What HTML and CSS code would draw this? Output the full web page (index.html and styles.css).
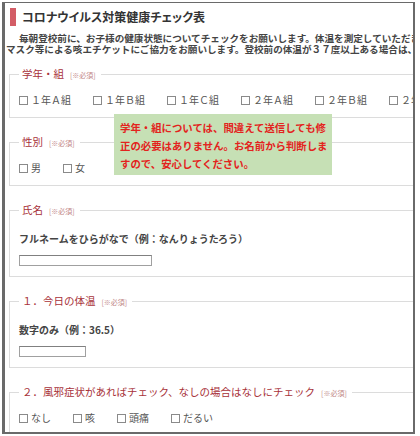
FILE: index.html
```html
<!DOCTYPE html>
<html lang="ja">
<head>
<meta charset="utf-8">
<title>コロナウイルス対策健康チェック表</title>
<link rel="stylesheet" href="styles.css">
</head>
<body>
<div class="window">
  <div class="page">
    <h1 class="title">コロナウイルス対策健康チェック表</h1>
    <p class="intro">毎朝登校前に、お子様の健康状態についてチェックをお願いします。体温を測定していただき、<br>マスク等による咳エチケットにご協力をお願いします。登校前の体温が３７度以上ある場合は、登校を控えてください。</p>

    <fieldset class="group">
      <legend><span class="q">学年・組</span><span class="req">[※必須]</span></legend>
      <div class="choices">
        <label class="choice"><span class="box"></span>１年Ａ組</label>
        <label class="choice"><span class="box"></span>１年Ｂ組</label>
        <label class="choice"><span class="box"></span>１年Ｃ組</label>
        <label class="choice"><span class="box"></span>２年Ａ組</label>
        <label class="choice"><span class="box"></span>２年Ｂ組</label>
        <label class="choice"><span class="box"></span>２年Ｃ組</label>
      </div>
    </fieldset>

    <fieldset class="group">
      <legend><span class="q">性別</span><span class="req">[※必須]</span></legend>
      <div class="choices">
        <label class="choice"><span class="box"></span>男</label>
        <label class="choice"><span class="box"></span>女</label>
      </div>
    </fieldset>

    <fieldset class="group">
      <legend><span class="q">氏名</span><span class="req">[※必須]</span></legend>
      <div class="prompt">フルネームをひらがなで（例：なんりょうたろう）</div>
      <input class="textbox wide" type="text">
    </fieldset>

    <fieldset class="group">
      <legend><span class="q">１．今日の体温</span><span class="req">[※必須]</span></legend>
      <div class="prompt">数字のみ（例：36.5）</div>
      <input class="textbox narrow" type="text">
    </fieldset>

    <fieldset class="group">
      <legend><span class="q">２．風邪症状があればチェック、なしの場合はなしにチェック</span><span class="req">[※必須]</span></legend>
      <div class="choices">
        <label class="choice"><span class="box"></span>なし</label>
        <label class="choice"><span class="box"></span>咳</label>
        <label class="choice"><span class="box"></span>頭痛</label>
        <label class="choice"><span class="box"></span>だるい</label>
      </div>
    </fieldset>

    <div class="note">学年・組については、間違えて送信しても修正の必要はありません。お名前から判断しますので、安心してください。</div>
  </div>
</div>
</body>
</html>
```

FILE: styles.css
```css
html, body {
  margin: 0;
  background: #fff;
}

body {
  font-family: "Noto Sans CJK JP", "Noto Sans", sans-serif;
  font-size: 10px;
  color: #444;
}

.window {
  margin: 2px 0 0 2px;
  width: 413px;
  height: 432px;
  box-sizing: border-box;
  border-style: solid;
  border-color: #6a6a6a;
  border-width: 1px 2px 2px 3px;
  overflow: hidden;
}

.page {
  position: relative;
  height: 100%;
  box-sizing: border-box;
  padding: 5px 0 0 1px;
  overflow: hidden;
}

.title {
  margin: 0 0 0 4px;
  height: 18px;
  line-height: 18px;
  border-left: 6px solid #d35d66;
  padding-left: 6px;
  font-size: 12px;
  font-weight: bold;
  color: #333;
  font-feature-settings: "palt";
}

.intro {
  margin: 7px 0 0;
  font-size: 9.6px;
  line-height: 11px;
  font-weight: bold;
  color: #444;
  white-space: nowrap;
  text-indent: 13px;
}

.group {
  margin: 17px 0 0 3px;
  padding: 11px 9px 10px 9px;
  border: 1px solid #dcdcdc;
  width: 460px;
  min-width: 0;
  box-sizing: border-box;
}

.group:first-of-type {
  margin-top: 12px;
}

.group legend {
  padding: 0 5px 0 3px;
  font-size: 10.5px;
  line-height: 14px;
  white-space: nowrap;
}

.q {
  color: #a8323a;
}

.req {
  font-size: 7px;
  color: #c08585;
  margin-left: 6px;
}

.choices {
  display: flex;
  white-space: nowrap;
  line-height: 14px;
  font-size: 10px;
  color: #555;
}

.choice {
  display: inline-flex;
  align-items: center;
  margin-right: 22px;
  flex: none;
}

.box {
  width: 7px;
  height: 7px;
  border: 1px solid #8a8a8a;
  margin-right: 3px;
}

.prompt {
  font-size: 10px;
  line-height: 20px;
  font-weight: bold;
  color: #444;
}

.textbox {
  display: block;
  margin: 6px 0 0;
  padding: 0;
  height: 11px;
  box-sizing: border-box;
  border: 1px solid #a0a0a0;
  border-top-color: #808080;
  background: #fff;
}

.textbox.wide {
  width: 133px;
}

.textbox.narrow {
  width: 67px;
}

.note {
  position: absolute;
  left: 109px;
  top: 111px;
  width: 218px;
  height: 61px;
  box-sizing: border-box;
  padding: 5px 3px 0 6px;
  background: #c6e0b5;
  color: #e3231d;
  font-weight: bold;
  font-size: 10.4px;
  line-height: 18px;
}
```
